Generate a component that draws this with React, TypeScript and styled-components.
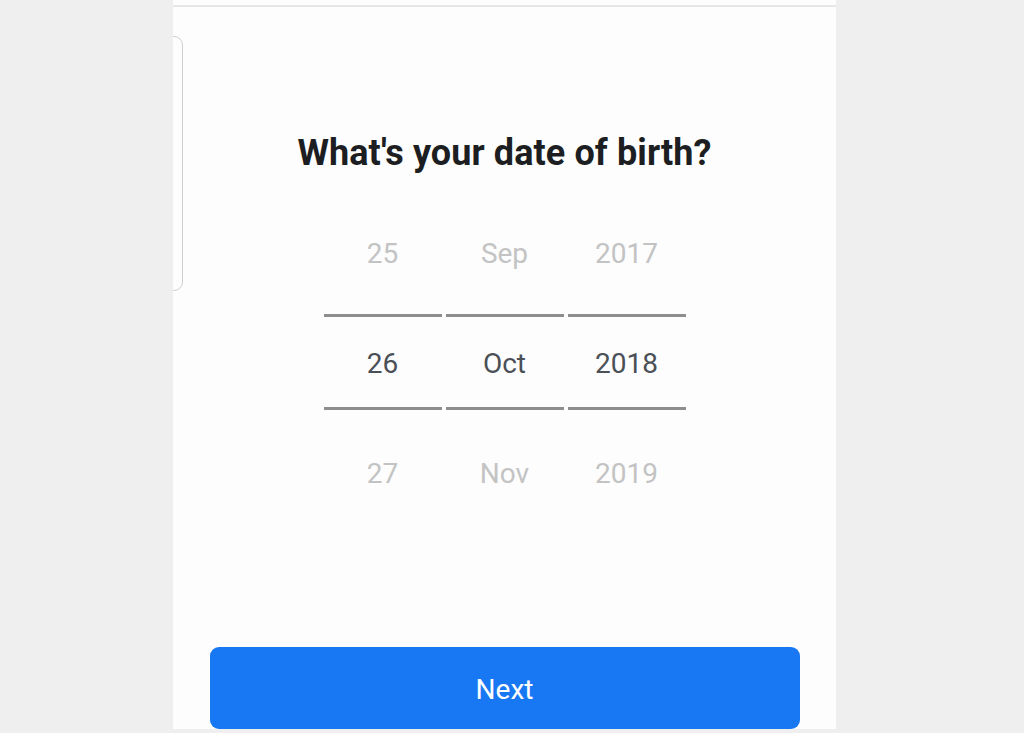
import React from 'react';
import styled, { createGlobalStyle } from 'styled-components';

const GlobalStyle = createGlobalStyle`
  html, body {
    margin: 0;
    padding: 0;
    background: #efefef;
    font-family: Roboto, "Liberation Sans", Arial, sans-serif;
  }
`;

// Styles
const Page = styled.div`
  display: flex;
  justify-content: flex-start;
  width: 1024px;
  height: 733px;
  padding-left: 173px;
  box-sizing: border-box;
`;

const Panel = styled.div`
  position: relative;
  display: flex;
  flex-direction: column;
  align-items: center;
  width: 663px;
  height: 729px;
  background: #fdfdfd;
  overflow: hidden;
`;

const TopBar = styled.div`
  align-self: stretch;
  height: 5px;
  border-bottom: 2px solid #e6e6e6;
`;

// edge of the card sliding out to the left
const PeekCard = styled.div`
  position: absolute;
  left: -40px;
  top: 36px;
  width: 48px;
  height: 253px;
  border: 1px solid #cfcfcf;
  border-radius: 9px;
`;

const Title = styled.h1`
  margin: 125px 0 0;
  font-size: 36px;
  line-height: 42px;
  font-weight: 700;
  letter-spacing: 0.1px;
  color: #1c1e21;
`;

const Picker = styled.div`
  display: flex;
  gap: 4px;
  margin-top: 16px;
`;

const Column = styled.div`
  display: flex;
  flex-direction: column;
  width: 118px;
`;

const Item = styled.div<{ $selected?: boolean }>`
  display: flex;
  align-items: center;
  justify-content: center;
  padding-top: 3px;
  height: ${(p) => (p.$selected ? '87px' : '121px')};
  font-size: 28px;
  color: ${(p) => (p.$selected ? '#4b4f56' : '#c3c3c3')};
  border-top: ${(p) => (p.$selected ? '3px solid #8e8e8e' : 'none')};
  border-bottom: ${(p) => (p.$selected ? '3px solid #8e8e8e' : 'none')};
`;

const NextButton = styled.button`
  margin-top: auto;
  width: 590px;
  height: 82px;
  padding: 2px 0 0;
  border: none;
  border-radius: 9px;
  background: #1877f2;
  color: #ffffff;
  font-family: Roboto, "Liberation Sans", Arial, sans-serif;
  font-size: 28px;
  cursor: pointer;
`;

const columns = [
  ['25', '26', '27'],
  ['Sep', 'Oct', 'Nov'],
  ['2017', '2018', '2019'],
];

const App: React.FC = () => {
  return (
    <Page>
      <GlobalStyle />
      <Panel>
        <TopBar />
        <PeekCard />
        <Title>What's your date of birth?</Title>

        <Picker>
          {columns.map((col) => (
            <Column key={col[1]}>
              {col.map((value, i) => (
                <Item key={value} $selected={i === 1}>
                  {value}
                </Item>
              ))}
            </Column>
          ))}
        </Picker>

        <NextButton>Next</NextButton>
      </Panel>
    </Page>
  );
};

export default App;
